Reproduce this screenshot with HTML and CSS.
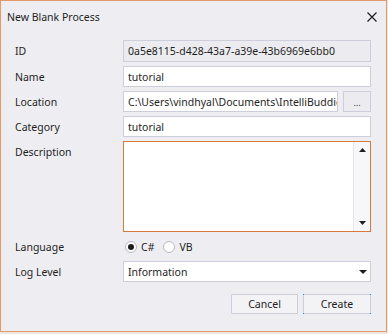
FILE: index.html
```html
<!DOCTYPE html>
<html>
<head>
<meta charset="utf-8">
<link rel="stylesheet" href="styles.css">
</head>
<body>
<div class="dialog">
  <div class="titlebar">
    <span class="title">New Blank Process</span>
    <svg class="close" width="10" height="10" viewBox="0 0 10 10"><path d="M0.5 0.5 L9.5 9.5 M9.5 0.5 L0.5 9.5" stroke="#1e1e1e" stroke-width="1.2" fill="none"/></svg>
  </div>
  <div class="form">
    <label class="lbl">ID</label>
    <div class="field readonly">0a5e8115-d428-43a7-a39e-43b6969e6bb0</div>

    <label class="lbl">Name</label>
    <div class="field">tutorial</div>

    <label class="lbl">Location</label>
    <div class="loc">
      <div class="field clip">C:\Users\vindhyal\Documents\IntelliBuddies</div>
      <div class="browse">...</div>
    </div>

    <label class="lbl">Category</label>
    <div class="field">tutorial</div>

    <label class="lbl top">Description</label>
    <div class="textarea">
      <div class="ta-body"></div>
      <div class="scroll">
        <svg width="7" height="4" viewBox="0 0 7 4"><path d="M0 4 L3.5 0 L7 4 Z" fill="#1e1e1e"/></svg>
        <svg width="7" height="4" viewBox="0 0 7 4"><path d="M0 0 L3.5 4 L7 0 Z" fill="#1e1e1e"/></svg>
      </div>
    </div>

    <label class="lbl">Language</label>
    <div class="radios">
      <span class="radio checked"></span><span class="rtxt">C#</span>
      <span class="radio"></span><span class="rtxt">VB</span>
    </div>

    <label class="lbl">Log Level</label>
    <div class="field select">
      <span>Information</span>
      <svg width="8" height="4" viewBox="0 0 8 4"><path d="M0 0 L4 4 L8 0 Z" fill="#1e1e1e"/></svg>
    </div>
  </div>
  <div class="buttons">
    <div class="btn cancel">Cancel</div>
    <div class="btn create">Create</div>
  </div>
</div>
</body>
</html>
```

FILE: styles.css
```css
html, body {
  margin: 0;
  padding: 0;
  background: #efe6df;
}
body {
  font-family: "Noto Sans", "DejaVu Sans", sans-serif;
  font-size: 10.5px;
  color: #1e1e1e;
}
.dialog {
  box-sizing: border-box;
  width: 387px;
  height: 332px;
  border: 1px solid #e19a68;
  background: #eeeef2;
  display: flex;
  flex-direction: column;
}
.titlebar {
  height: 39px;
  display: flex;
  align-items: flex-start;
  justify-content: space-between;
  padding: 8px 9px 0 6px;
  box-sizing: border-box;
}
.title {
  line-height: 17px;
}
.close {
  margin-top: 3px;
}
.form {
  display: grid;
  grid-template-columns: 108px minmax(0, 1fr);
  grid-template-rows: 22px 21px 21px 21px 91px 21px 21px;
  row-gap: 4px;
  padding: 0 15px 0 14px;
}
.lbl {
  display: flex;
  align-items: center;
}
.lbl.top {
  align-items: flex-start;
  padding-top: 4px;
}
.field {
  box-sizing: border-box;
  background: #ffffff;
  border: 1px solid #cccedb;
  padding: 0 4px;
  display: flex;
  align-items: center;
  white-space: nowrap;
  overflow: hidden;
  min-width: 0;
}
.field.readonly {
  background: #ececf0;
}
.loc {
  display: flex;
  gap: 5px;
  min-width: 0;
}
.loc .field {
  flex: 1;
  min-width: 0;
}
.browse {
  box-sizing: border-box;
  flex: 0 0 28px;
  border: 1px solid #cccedb;
  background: #ececf0;
  display: flex;
  align-items: center;
  justify-content: center;
  font-size: 9px;
  padding-top: 2px;
  color: #333;
}
.textarea {
  box-sizing: border-box;
  border: 1px solid #d87a3c;
  background: #ffffff;
  display: flex;
}
.ta-body {
  flex: 1;
}
.scroll {
  width: 16px;
  border-left: 1px solid #e6e6e9;
  background: #f7f7f9;
  display: flex;
  flex-direction: column;
  justify-content: space-between;
  align-items: center;
  padding: 6px 0 6px;
}
.radios {
  display: flex;
  align-items: center;
  padding-left: 2px;
}
.radio {
  box-sizing: border-box;
  width: 12px;
  height: 12px;
  border-radius: 50%;
  border: 1px solid #b8b8c2;
  background: #fff;
  display: flex;
  align-items: center;
  justify-content: center;
}
.radio.checked::after {
  content: "";
  width: 6px;
  height: 6px;
  border-radius: 50%;
  background: #1e1e1e;
}
.rtxt {
  margin-left: 4px;
  margin-right: 9px;
}
.select {
  justify-content: space-between;
  padding-right: 3px;
}
.buttons {
  display: flex;
  justify-content: flex-end;
  gap: 5px;
  padding: 12px 15px 0 0;
}
.btn {
  box-sizing: border-box;
  height: 20px;
  border: 1px solid #cccedb;
  background: #f3f3f6;
  display: flex;
  align-items: center;
  justify-content: center;
  position: relative;
}
.cancel {
  width: 67px;
}
.create {
  width: 68px;
}
.create::before {
  content: "";
  position: absolute;
  inset: -1px;
  background:
    linear-gradient(#1c97ea, #1c97ea) left top / 1px 1px no-repeat,
    linear-gradient(#1c97ea, #1c97ea) right top / 1px 1px no-repeat,
    linear-gradient(#1c97ea, #1c97ea) left bottom / 1px 1px no-repeat,
    linear-gradient(#1c97ea, #1c97ea) right bottom / 1px 1px no-repeat;
}
```
